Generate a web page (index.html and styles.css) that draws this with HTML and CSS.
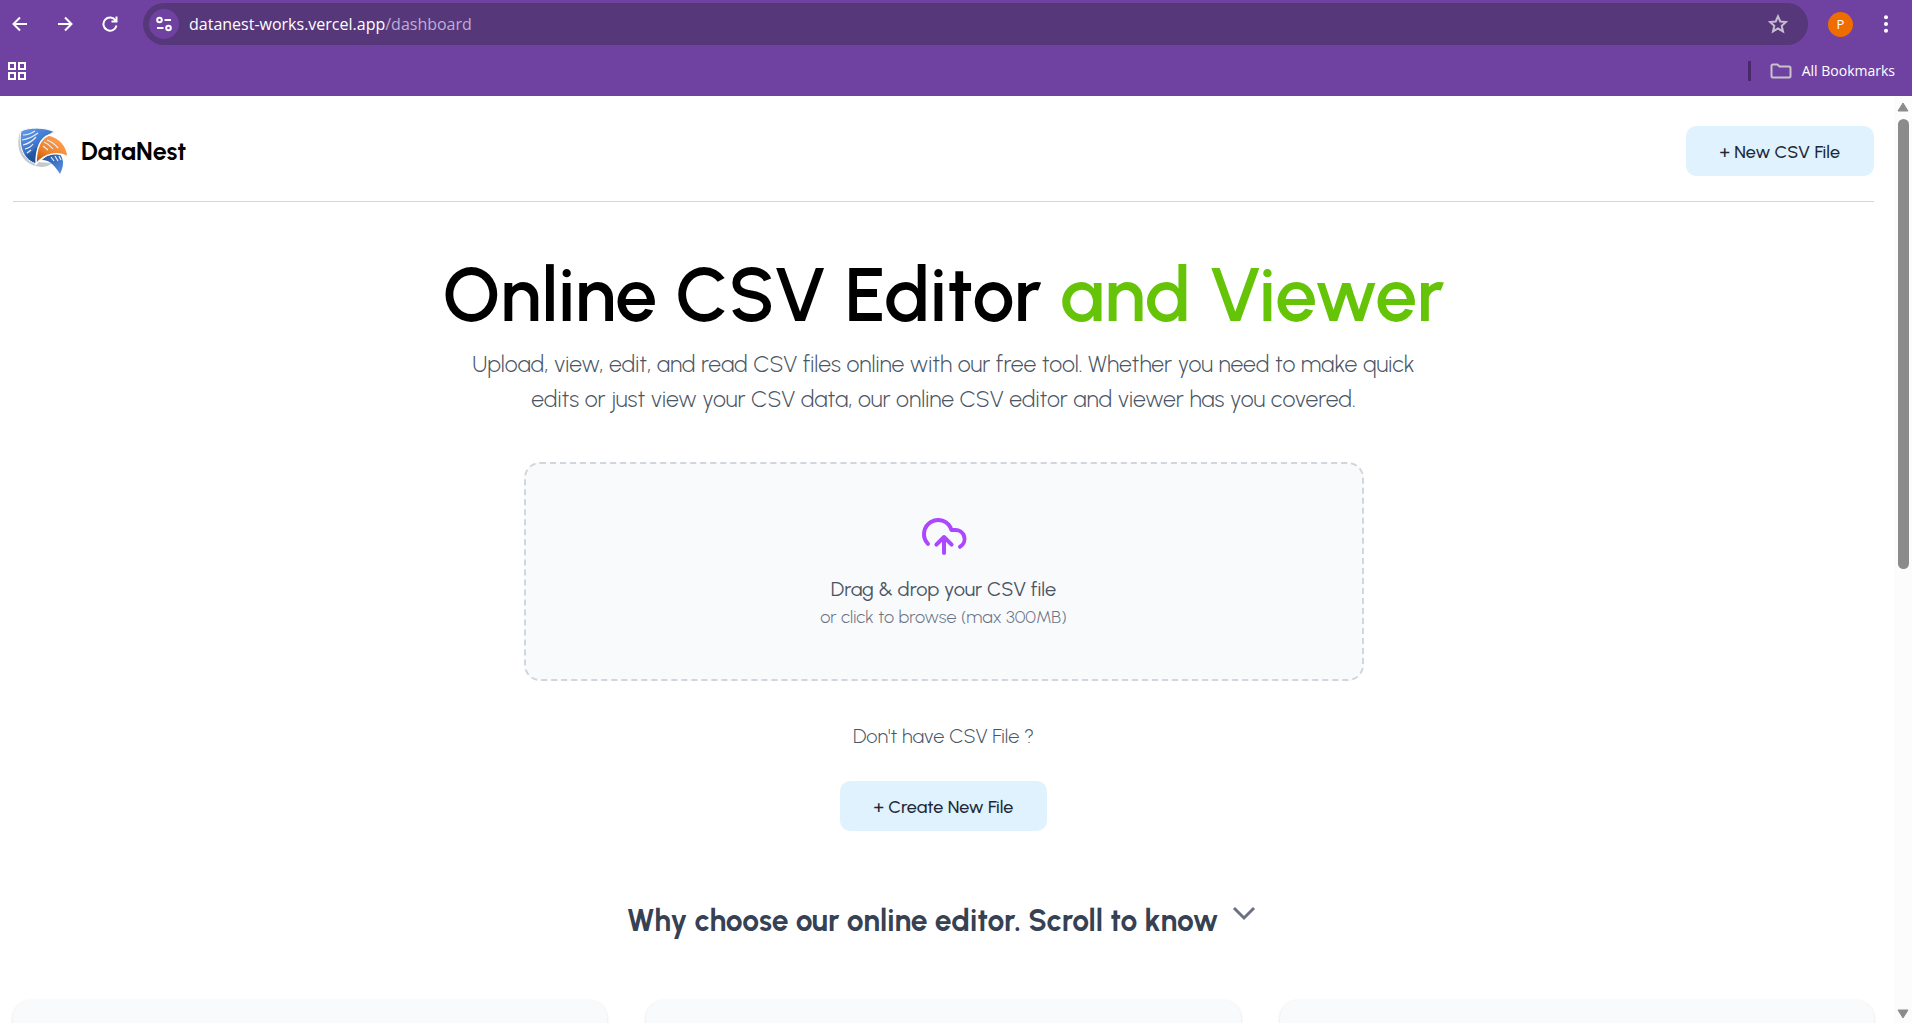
FILE: index.html
```html
<!DOCTYPE html>
<html lang="en">
<head>
<meta charset="utf-8">
<meta name="viewport" content="width=device-width, initial-scale=1">
<title>DataNest</title>
<link rel="stylesheet" href="styles.css">
</head>
<body>
<div class="browser">
  <div class="toolbar">
    <button class="tool" aria-label="Back"><svg width="16" height="16" viewBox="0 0 16 16"><path d="M15 8H2M8 1.500L1.500 8L8 14.500"/></svg></button>
    <button class="tool" aria-label="Forward"><svg width="16" height="16" viewBox="0 0 16 16"><path d="M1 8H14M8 1.500L14.500 8L8 14.500"/></svg></button>
    <button class="tool" aria-label="Reload"><svg width="16" height="16" viewBox="0 0 16 16"><path d="M13.600 4.500A6.600 6.600 0 1 0 14.500 9.500M14.500 .5V5.500H9.500"/></svg></button>
    <div class="address">
      <button class="site-info" aria-label="View site information"><svg width="16" height="16" viewBox="0 0 16 16"><circle cx="3.500" cy="4" r="2.300"/><path d="M8.500 4H15M1 12H7.500"/><circle cx="12.500" cy="12" r="2.300"/></svg></button>
      <div class="url">datanest-works.vercel.app<span class="path">/dashboard</span></div>
      <button class="star" aria-label="Bookmark this page"><svg width="20" height="20" viewBox="0 0 20 20"><path d="M10 2.300L12.300 7.500L18 8L13.700 11.800L15 17.400L10 14.500L5 17.400L6.300 11.800L2 8L7.700 7.500Z"/></svg></button>
    </div>
    <button class="profile">P</button>
    <button class="menu" aria-label="Menu"><svg width="6" height="18" viewBox="0 0 6 18"><circle cx="3" cy="2.200" r="2"/><circle cx="3" cy="9" r="2"/><circle cx="3" cy="15.800" r="2"/></svg></button>
  </div>
  <div class="bookmarks">
    <button class="tool" aria-label="Apps"><svg width="18" height="18" viewBox="0 0 18 18"><path d="M1 1H7V7H1ZM11 1H17V7H11ZM1 11H7V17H1ZM11 11H17V17H11Z"/></svg></button>
    <button class="all-bookmarks"><svg width="22" height="16" viewBox="0 0 22 16"><path d="M3 1.500H7.500L9.500 3.500H19Q20.500 3.500 20.500 5V13Q20.500 14.500 19 14.500H3Q1.500 14.500 1.500 13V3Q1.500 1.500 3 1.500Z"/></svg>All Bookmarks</button>
  </div>
</div>
<div class="viewport">
  <div class="page">
    <header class="header">
      <a class="brand" href="#">
        <svg width="52" height="50" viewBox="0 0 52 50" aria-hidden="true">
          <defs>
            <linearGradient id="blue" x1="0" y1="0" x2="0.600" y2="1"><stop offset="0" stop-color="#699eea"/><stop offset="0.500" stop-color="#3f78cf"/><stop offset="1" stop-color="#164384"/></linearGradient>
            <linearGradient id="tail" x1="0" y1="0" x2="1" y2="1"><stop offset="0" stop-color="#1b4f99"/><stop offset="1" stop-color="#5b93e6"/></linearGradient>
            <linearGradient id="orange" x1="0.800" y1="0" x2="0" y2="1"><stop offset="0" stop-color="#ffa75c"/><stop offset="0.600" stop-color="#ee7f28"/><stop offset="1" stop-color="#a94c0c"/></linearGradient>
          </defs>
          <path d="M3 6C-2 22 4 39 24 41Q31 41 35 37L20 36Z" fill="#c4c8cf"/>
          <path d="M4 5C12 1 28 1 38 6C29 8 21 17 20 38C7 35 1 21 4 5Z" fill="url(#blue)" stroke="#fff"/>
          <path d="M38 6C29 8 21 17 20 37Q12 35 9 29Q19 26 23 15Q28 8 38 6Z" fill="#1d4c92" fill-opacity=".55"/>
          <path d="M25 34C33 34 38 40 43 48C47 40 47 34 43 28Q33 26 25 34Z" fill="url(#tail)"/>
          <path d="M19 38C19 22 24 12 32 9C43 12 50 20 51 31C41 25 28 27 19 38Z" fill="url(#orange)" stroke="#fff" stroke-width="1.500"/>
          <path d="M6 9Q12 9 18 5M5 14Q13 13 21 7M6 19Q14 17 19 11M8 23Q13 22 16 18M10 27L14 24M27 16Q32 18 36 23M30 14Q36 16 41 22M26 20L31 24M34 31L37 35M38 30L41 35M42 30L44 34" fill="none" stroke="#e8f0fb" stroke-width="1.200"/>
        </svg>
        <span>DataNest</span>
      </a>
      <button class="action">+ New CSV File</button>
    </header>
    <main class="main">
      <h1 class="title">Online CSV Editor <span class="accent">and Viewer</span></h1>
      <p class="lead">Upload, view, edit, and read CSV files online with our free tool. Whether you need to make quick<br>edits or just view your CSV data, our online CSV editor and viewer has you covered.</p>
      <button class="dropzone">
        <svg width="48" height="48" viewBox="0 0 24 24"><path d="M4 14.900A7 7 0 1 1 15.710 8H17.500A4.500 4.500 0 0 1 20 16.400M12 11.500V19.500M8.200 15.300L12 11.500L15.800 15.300"/></svg>
        <span class="drop-title">Drag &amp; drop your CSV file</span>
        <span class="drop-note">or click to browse (max 300MB)</span>
      </button>
      <p class="question">Don't have CSV File ?</p>
      <button class="action">+ Create New File</button>
      <h2 class="why">Why choose our online editor. Scroll to know <svg width="32" height="32" viewBox="0 0 32 32"><path d="M6 11L16 21L26 11"/></svg></h2>
      <div class="cards"><section class="card"></section><section class="card"></section><section class="card"></section></div>
    </main>
  </div>
  <div class="scrollbar" aria-hidden="true">
    <svg width="12" height="10" viewBox="0 0 12 10"><path d="M6 1L11 9H1Z"/></svg>
    <div class="track"><div class="thumb"></div></div>
    <svg width="12" height="10" viewBox="0 0 12 10"><path d="M6 9L11 1H1Z"/></svg>
  </div>
</div>
</body>
</html>
```

FILE: styles.css
```css
* { box-sizing: border-box; }
body {
  margin: 0;
  height: 100vh;
  display: flex;
  flex-direction: column;
  overflow: hidden;
  background: #fff;
  color: #000;
  font-family: Urbanist, Lato, sans-serif;
}
h1, h2, p { margin: 0; }
button { border: 0; padding: 0; background: none; color: inherit; font: inherit; cursor: pointer; }
svg { display: block; flex: none; }

/* Browser bars */
.browser { flex: none; background: #6f42a1; color: #fff; font-family: "Segoe UI", "Open Sans", sans-serif; }
.browser svg { fill: none; stroke: #fff; stroke-width: 2; }
.toolbar { height: 48px; padding: 0 23px 0 12px; display: flex; align-items: center; }
.tool { width: 17px; margin-right: 28px; flex: none; }
.address {
  flex: 1;
  height: 42px;
  padding: 0 20px 0 6px;
  display: flex;
  align-items: center;
  border-radius: 21px;
  background: #56377a;
}
.tool + .address { margin-left: -4px; }
.site-info { width: 30px; height: 30px; border-radius: 50%; background: #6f42a1; display: grid; place-items: center; }
.url { flex: 1; padding-left: 10px; font-size: 16px; line-height: 24px; }
.path { color: #bfadd5; }
.browser .star svg { stroke: #c6bdcf; }
.profile { width: 25px; height: 25px; margin: 0 30px 0 20px; border-radius: 50%; background: #ef6c00; font-size: 13px; }
.browser .menu svg { fill: #fff; stroke: none; }
.bookmarks { height: 48px; padding: 0 17px 3px 8px; display: flex; align-items: center; justify-content: space-between; }
.all-bookmarks { display: flex; align-items: center; gap: 10px; padding-left: 19px; border-left: 3px solid #49296b; font-size: 14px; line-height: 20px; }
.browser .all-bookmarks svg { stroke: #c9c3c9; }

/* Page */
.viewport { flex: 1; min-height: 0; display: flex; }
.page { flex: 1; overflow: hidden; padding: 0 20px 0 13px; }
.header {
  height: 106px;
  display: flex;
  align-items: center;
  justify-content: space-between;
  padding-top: 4px;
  border-bottom: 1px solid #d1d5dc;
}
.brand { display: flex; align-items: center; gap: 12px; padding-left: 4px; color: #000; text-decoration: none; font-size: 25px; font-weight: 700; line-height: 32px; }
.action { height: 50px; padding: 2px 34px 0; border-radius: 10px; background: #dff2fe; color: #1e2939; font-size: 18px; font-weight: 500; line-height: 24px; }
.main { display: flex; flex-direction: column; align-items: center; text-align: center; }
.title { margin-top: 53px; font-size: 75px; font-weight: 600; line-height: 80px; }
.accent { color: #65c408; }
.lead { margin-top: 12px; color: #4a5565; font-size: 23px; font-weight: 300; line-height: 35px; }
.dropzone {
  width: 100%;
  max-width: 840px;
  height: 219px;
  margin-top: 45px;
  display: flex;
  flex-direction: column;
  align-items: center;
  justify-content: center;
  border: 2px dashed #d1d5dc;
  border-radius: 16px;
  background: #f9fafc;
}
.dropzone svg { fill: none; stroke: #ad46ff; stroke-width: 2; stroke-linecap: round; stroke-linejoin: round; }
.drop-title { margin-top: 12px; color: #4a5565; font-size: 20px; line-height: 30px; }
.drop-note { color: #6a7282; font-size: 18px; font-weight: 300; line-height: 26px; }
.question { margin: 40px 0 30px; color: #4a5565; font-size: 20px; font-weight: 300; line-height: 30px; }
.why { margin-top: 66px; display: flex; gap: 10px; color: #364153; font-size: 30px; font-weight: 700; line-height: 48px; }
.why svg { fill: none; stroke: #6a7282; stroke-width: 3; }
.cards { width: 100%; margin-top: 55px; display: grid; grid-template-columns: repeat(3, 1fr); gap: 39px; }
.card { height: 220px; border-radius: 18px; background: #f9fafb; box-shadow: 0 1px 3px rgba(0, 0, 0, 0.15); }

.scrollbar { flex: none; width: 18px; padding: 6px 0 4px; display: flex; flex-direction: column; align-items: center; gap: 7px; background: #fcfcfc; }
.scrollbar svg { fill: #8b8b8b; stroke: #8b8b8b; stroke-linejoin: round; }
.track { flex: 1; width: 11px; }
.thumb { height: 51%; border-radius: 6px; background: #8b8b8b; }
```
